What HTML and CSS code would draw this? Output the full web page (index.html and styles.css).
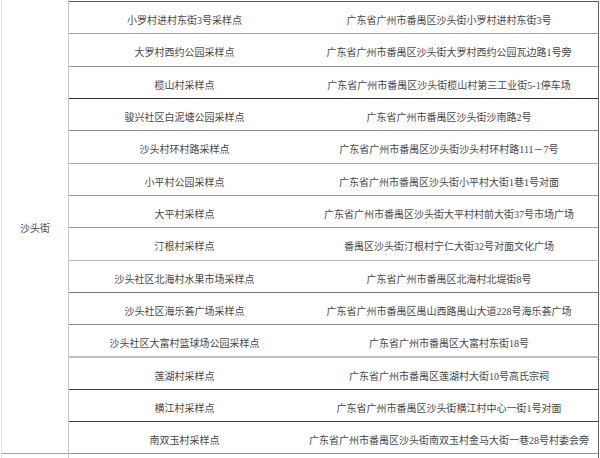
FILE: index.html
```html
<!DOCTYPE html>
<html lang="zh-CN">
<head>
<meta charset="utf-8">
<title>沙头街采样点</title>
<link rel="stylesheet" href="styles.css">
</head>
<body>
<div class="sheet">
  <div class="gutter"></div>
  <div class="district-col">
    <div class="district">沙头街</div>
    <div class="district-next"></div>
  </div>
  <div class="rows">
    <div class="row l1"><div class="name">小罗村进村东街3号采样点</div><div class="addr">广东省广州市番禺区沙头街小罗村进村东街3号</div></div>
    <div class="row l2 tall"><div class="name">大罗村西约公园采样点</div><div class="addr">广东省广州市番禺区沙头街大罗村西约公园瓦边路1号旁</div></div>
    <div class="row l3"><div class="name">榄山村采样点</div><div class="addr">广东省广州市番禺区沙头街榄山村第三工业街5-1停车场</div></div>
    <div class="row l4"><div class="name">骏兴社区白泥塘公园采样点</div><div class="addr">广东省广州市番禺区沙头街沙南路2号</div></div>
    <div class="row l5 tall"><div class="name">沙头村环村路采样点</div><div class="addr">广东省广州市番禺区沙头街沙头村环村路111－7号</div></div>
    <div class="row l6"><div class="name">小平村公园采样点</div><div class="addr">广东省广州市番禺区沙头街小平村大街1巷1号对面</div></div>
    <div class="row l7"><div class="name">大平村采样点</div><div class="addr">广东省广州市番禺区沙头街大平村村前大街37号市场广场</div></div>
    <div class="row l8 tall"><div class="name">汀根村采样点</div><div class="addr">番禺区沙头街汀根村宁仁大街32号对面文化广场</div></div>
    <div class="row l9"><div class="name">沙头社区北海村水果市场采样点</div><div class="addr">广东省广州市番禺区北海村北堤街8号</div></div>
    <div class="row l10"><div class="name">沙头社区海乐荟广场采样点</div><div class="addr">广东省广州市番禺区禺山西路禺山大道228号海乐荟广场</div></div>
    <div class="row l11"><div class="name">沙头社区大富村篮球场公园采样点</div><div class="addr">广东省广州市番禺区大富村东街18号</div></div>
    <div class="row l12 tall"><div class="name">莲湖村采样点</div><div class="addr">广东省广州市番禺区莲湖村大街10号高氏宗祠</div></div>
    <div class="row l13"><div class="name">横江村采样点</div><div class="addr">广东省广州市番禺区沙头街横江村中心一街1号对面</div></div>
    <div class="row l14"><div class="name">南双玉村采样点</div><div class="addr">广东省广州市番禺区沙头街南双玉村金马大街一巷28号村委会旁</div></div>
    <div class="row l15 rest"></div>
  </div>
</div>
</body>
</html>
```
FILE: styles.css
```css
* { box-sizing: border-box; }
html, body { margin: 0; padding: 0; background: #fff; }
body {
  font-family: "Liberation Serif", "Noto Sans CJK SC", serif;
  font-size: 10px;
  color: #474747;
  width: 600px;
  height: 458px;
  overflow: hidden;
}
.sheet { display: flex; height: 458px; }
.gutter { width: 2px; border-right: 1px solid #dde2e9; }
.district-col {
  width: 67px;
  display: flex;
  flex-direction: column;
  border-right: 1px solid #c8c8c8;
}
.district {
  height: 454px;
  border-bottom: 1px solid #a0a0a0;
  display: flex;
  align-items: center;
  padding-left: 18px;
  padding-top: 2px;
}
.district-next { flex: 1; }
.rows { width: 530px; padding-top: 1px; }
.row {
  display: grid;
  grid-template-columns: 231px 298px;
  height: 32px;
  border-top: 1px solid #999;
  border-right: 1px solid #666;
}
.row.tall { height: 33px; }
.row.rest { height: 8px; }
.name, .addr {
  display: flex;
  align-items: center;
  justify-content: center;
  white-space: nowrap;
  padding-top: 3px;
}
.l1 { border-top-color: #5a5a5a; }
.l2 { border-top-color: #a0a0a0; }
.l3 { border-top-color: #999; }
.l4 { border-top-color: #333; }
.l5 { border-top-color: #8a8a8a; }
.l6 { border-top-color: #aaa; }
.l7 { border-top-color: #999; }
.l8 { border-top-color: #999; }
.l9 { border-top-color: #bbb; }
.l10 { border-top-color: #777; }
.l11 { border-top-color: #888; }
.l12 { border-top: 2px solid #c0c0c0; }
.l13 { border-top-color: #444; }
.l14 { border-top-color: #444; }
.l15 { border-top-color: #999; }
```
